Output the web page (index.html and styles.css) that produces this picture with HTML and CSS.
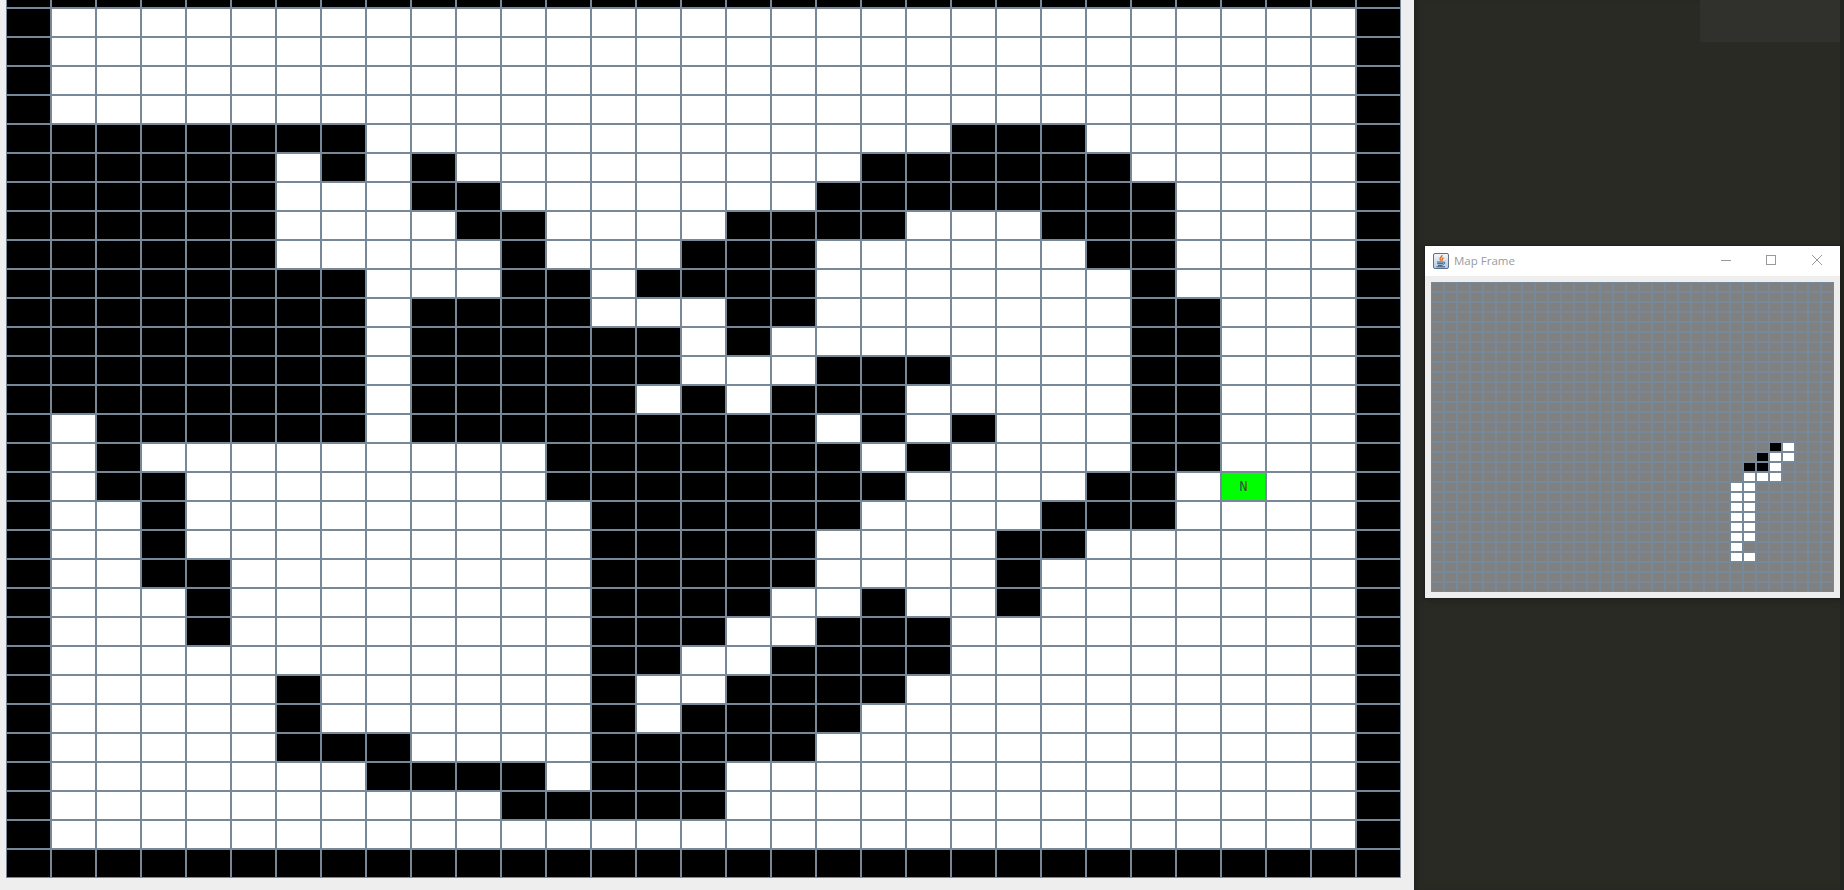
FILE: index.html
```html
<!DOCTYPE html>
<html lang="en">
<head>
    <meta charset="UTF-8">
    <meta name="viewport" content="width=device-width, initial-scale=1.0">
    <title>Map Frame</title>
    <link rel="stylesheet" href="styles.css">
</head>
<body>
<div class="app">
    <div class="grid big" id="bigGrid"></div>
</div>

<div class="desktop">
    <div class="tab-shade"></div>

    <div class="window">
        <div class="titlebar">
            <svg class="java-icon" width="16" height="16" viewBox="0 0 16 16">
                <defs>
                    <linearGradient id="iconBack" x1="0" y1="0" x2="0" y2="1">
                        <stop offset="0" stop-color="#f4f7fa"/>
                        <stop offset="1" stop-color="#b4c7dc"/>
                    </linearGradient>
                </defs>
                <rect x="0.5" y="0.5" width="15" height="15" rx="1.5" fill="url(#iconBack)" stroke="#5d7086"/>
                <path d="M9 2c.6 1.500-2.200 2.400-2 4 .1.700.5 1.200.9 1.600M10.300 4.600c-.4.800-1.400 1.200-1.300 2 0 .4.200.7.400 1" fill="none" stroke="#e2660f" stroke-width="1.300"/>
                <path d="M4 9h6.500M4.300 10.700h5.700M5 12.400h4.500M3.500 13.800h8.500M10.500 9.200c1.800-.4 2.300 1.500-.6 2.100" fill="none" stroke="#2d5a8a" stroke-width="1"/>
            </svg>
            <span class="title-text">Map Frame</span>
            <div class="win-buttons">
                <div class="win-btn min-btn">
                    <svg width="10" height="10" viewBox="0 0 10 10"><path d="M0 5.500h10" stroke="#999" stroke-width="1"/></svg>
                </div>
                <div class="win-btn">
                    <svg width="10" height="10" viewBox="0 0 10 10"><rect x="0.500" y="0.500" width="9" height="9" fill="none" stroke="#999" stroke-width="1"/></svg>
                </div>
                <div class="win-btn">
                    <svg width="10" height="10" viewBox="0 0 10 10"><path d="M0 0l10 10M10 0L0 10" stroke="#999" stroke-width="1" fill="none"/></svg>
                </div>
            </div>
        </div>
        <div class="client">
            <div class="grid small" id="smallGrid"></div>
        </div>
    </div>
</div>

<script src="script.js"></script>
</body>
</html>
```

FILE: styles.css
```css
body {
    margin: 0;
    padding: 0;
    display: flex;
    height: 890px;
    overflow: hidden;
    background: #eeeeee;
}

.app {
    box-sizing: border-box;
    width: 1414px;
    height: 890px;
    padding-left: 6px;
    overflow: hidden;
    background: #eeeeee;
}

.grid {
    display: grid;
}

.big {
    grid-template-columns: repeat(31, 45px);
    grid-auto-rows: 29px;
    margin-top: -21px;
}

.small {
    grid-template-columns: repeat(31, 13px);
    grid-auto-rows: 10px;
}

.cell {
    box-sizing: border-box;
    border: 1px solid #778899;
    display: flex;
    align-items: center;
    justify-content: center;
}

.wall {
    background: #000000;
}

.free {
    background: #ffffff;
}

.unknown {
    background: #808080;
}

.robot {
    background: #00ff00;
    color: #444444;
    font-family: "Liberation Mono", monospace;
    font-size: 14px;
}

.desktop {
    box-sizing: border-box;
    position: relative;
    flex: 1;
    height: 890px;
    display: flex;
    justify-content: flex-end;
    align-items: flex-start;
    background: #292a24;
    border-right: 4px solid #232420;
    box-shadow: inset 6px 0 6px -4px #20211c;
}

.tab-shade {
    width: 140px;
    height: 42px;
    background: #30312c;
}

.window {
    position: absolute;
    top: 246px;
    left: 11px;
    width: 415px;
    background: #eeeeee;
    box-shadow: 0 0 0 1px #1f201c, 0 2px 8px rgba(0, 0, 0, 0.25);
}

.titlebar {
    height: 30px;
    display: flex;
    align-items: center;
    background: #ffffff;
}

.java-icon {
    margin-left: 8px;
    margin-right: 5px;
}

.title-text {
    flex: 1;
    margin-bottom: 2px;
    font-family: "Open Sans", sans-serif;
    font-size: 11.5px;
    color: #979aa3;
}

.win-buttons {
    display: flex;
}

.win-btn {
    width: 46px;
    height: 28px;
    padding-bottom: 2px;
    display: flex;
    align-items: center;
    justify-content: center;
}

.min-btn svg {
    margin-left: 2px;
}

.client {
    padding: 6px 6px 6px 6px;
}
```

FILE: script.js
```js
// # wall, . free, N robot
const bigMap = [
    "###############################",
    "#.............................#",
    "#.............................#",
    "#.............................#",
    "#.............................#",
    "########.............###......#",
    "######.#.#.........######.....#",
    "######...##.......########....#",
    "######....##....####...###....#",
    "######.....#...###......##....#",
    "########...##.####.......#....#",
    "########.####...##.......##...#",
    "########.######.#........##...#",
    "########.######...###....##...#",
    "########.#####.#.###.....##...#",
    "#.######.#########.#.#...##...#",
    "#.#.........#######.#....##...#",
    "#.##........########....##.N..#",
    "#..#.........######....###....#",
    "#..#.........#####....##......#",
    "#..##........#####....#.......#",
    "#...#........####..#..#.......#",
    "#...#........###..###.........#",
    "#............##..####.........#",
    "#.....#......#..####..........#",
    "#.....#......#.####...........#",
    "#.....###....#####............#",
    "#.......####.###..............#",
    "#..........#####..............#",
    "#.............................#",
    "###############################"
];

// row and columns the small map has already seen: [row, col, type]
const seen = [
    [16, 26, 'wall'], [16, 27, 'free'],
    [17, 25, 'wall'], [17, 26, 'free'], [17, 27, 'free'],
    [18, 24, 'wall'], [18, 25, 'wall'], [18, 26, 'free'],
    [19, 24, 'free'], [19, 25, 'free'], [19, 26, 'free'],
    [20, 23, 'free'], [20, 24, 'free'],
    [21, 23, 'free'], [21, 24, 'free'],
    [22, 23, 'free'], [22, 24, 'free'],
    [23, 23, 'free'], [23, 24, 'free'],
    [24, 23, 'free'], [24, 24, 'free'],
    [25, 23, 'free'], [25, 24, 'free'],
    [26, 23, 'free'],
    [27, 23, 'free'], [27, 24, 'free']
];

function makeCell(type) {
    const cell = document.createElement('div');
    cell.className = 'cell ' + type;
    return cell;
}

const bigGrid = document.getElementById('bigGrid');
bigMap.forEach(row => {
    for (const ch of row) {
        if (ch === '#') {
            bigGrid.appendChild(makeCell('wall'));
        } else if (ch === 'N') {
            const robot = makeCell('robot');
            robot.textContent = 'N';
            bigGrid.appendChild(robot);
        } else {
            bigGrid.appendChild(makeCell('free'));
        }
    }
});

const smallGrid = document.getElementById('smallGrid');
for (let r = 0; r < 31; r++) {
    for (let c = 0; c < 31; c++) {
        const hit = seen.find(s => s[0] === r && s[1] === c);
        smallGrid.appendChild(makeCell(hit ? hit[2] : 'unknown'));
    }
}
```
